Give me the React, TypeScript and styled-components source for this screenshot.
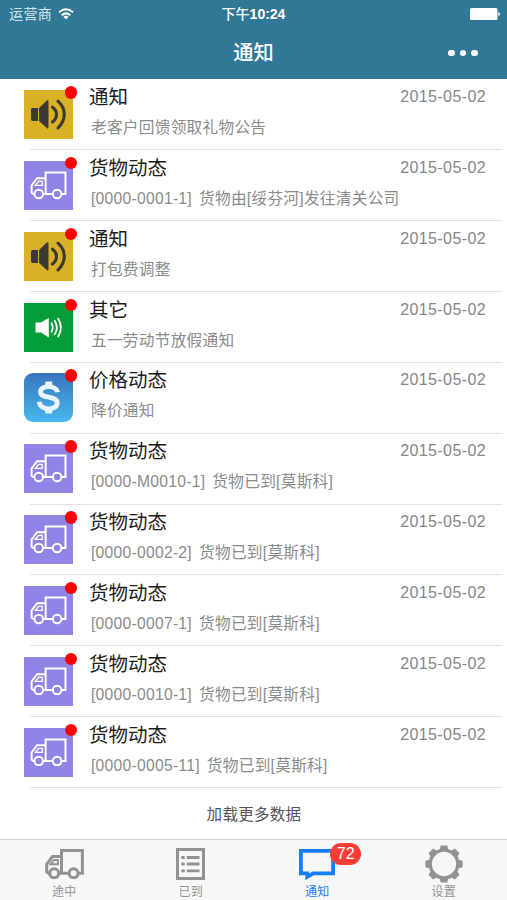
import React from 'react';
import styled, { createGlobalStyle } from 'styled-components';

const GlobalStyle = createGlobalStyle`
  * { box-sizing: border-box; }
  body {
    margin: 0;
    background: #fff;
    font-family: "Liberation Sans", "Noto Sans CJK SC", sans-serif;
  }
`;

const Screen = styled.div`
  width: 507px;
  height: 900px;
  display: flex;
  flex-direction: column;
  overflow: hidden;
  background: #fff;
`;

const Header = styled.header`
  flex: none;
  height: 79px;
  background: #317896;
  color: #fff;
`;

const StatusBar = styled.div`
  height: 27px;
  padding: 1px 7px 0 9px;
  display: grid;
  grid-template-columns: 1fr auto 1fr;
  align-items: center;
  font-size: 14px;
  line-height: 26px;
`;

const Carrier = styled.div`
  display: flex;
  align-items: center;
  gap: 6px;
  letter-spacing: 0.4px;
  color: #d3e6ef;
`;

const Clock = styled.div`
  margin-right: 2px;
  font-weight: 500;
  letter-spacing: 0;
  span { font-weight: 700; }
`;

const BatterySlot = styled.div`
  display: flex;
  justify-content: flex-end;
`;

const NavBar = styled.div`
  height: 52px;
  padding: 0 29px;
  display: grid;
  grid-template-columns: 1fr auto 1fr;
  align-items: center;
`;

const NavTitle = styled.h1`
  grid-column: 2;
  margin: 0;
  font-size: 20.3px;
  line-height: 52px;
  font-weight: 500;
`;

const MoreButton = styled.button`
  justify-self: end;
  display: flex;
  gap: 5px;
  padding: 0;
  border: 0;
  background: none;
`;

const Dot = styled.i`
  width: 6.6px;
  height: 6.6px;
  border-radius: 50%;
  background: #fff;
`;

const List = styled.main`
  flex: 1;
  display: flex;
  flex-direction: column;
`;

const Row = styled.article`
  flex: none;
  height: 70.85px;
  display: grid;
  grid-template-columns: 65px 1fr;
  padding-left: 24px;
`;

const IconTile = styled.div<{ $bg: string; $radius?: number }>`
  position: relative;
  width: 49px;
  height: 49px;
  margin-top: 11px;
  display: flex;
  background: ${(p) => p.$bg};
  border-radius: ${(p) => p.$radius ?? 0}px;
`;

const UnreadDot = styled.i`
  position: absolute;
  right: -4px;
  top: -4px;
  width: 12.5px;
  height: 12.5px;
  border-radius: 50%;
  background: #fe0000;
`;

const RowBody = styled.div`
  min-width: 0;
  padding-right: 21px;
`;

const RowTop = styled.div`
  height: 35px;
  display: flex;
  justify-content: space-between;
`;

const RowTitle = styled.h2`
  margin: 0;
  font-size: 19.5px;
  line-height: 36px;
  font-weight: 400;
  color: #1c1c1c;
`;

const RowDate = styled.time`
  font-size: 16px;
  line-height: 36px;
  letter-spacing: 0.4px;
  color: #868686;
`;

const RowText = styled.p`
  margin: 0;
  padding-left: 2px;
  font-size: 15.7px;
  line-height: 28px;
  letter-spacing: 0.25px;
  word-spacing: 2.5px;
  white-space: nowrap;
  color: #8b8b8b;
`;

const Divider = styled.hr`
  flex: none;
  width: 472px;
  height: 1px;
  margin: -0.5px 0 -0.5px 30px;
  border: 0;
  background: #e2e2e2;
`;

const LoadMore = styled.button`
  flex: 1;
  padding: 0 0 0 1px;
  border: 0;
  background: none;
  font: 15.5px "Liberation Sans", "Noto Sans CJK SC", sans-serif;
  letter-spacing: 0.3px;
  color: #555;
`;

const TabBar = styled.nav`
  flex: none;
  height: 61px;
  display: grid;
  grid-template-columns: repeat(4, 1fr);
  padding-left: 1px;
  border-top: 1px solid #cfcfcf;
  background: #f7f7f7;
`;

const Tab = styled.a<{ $active?: boolean }>`
  display: flex;
  flex-direction: column;
  align-items: center;
  padding-top: 4px;
  color: ${(p) => (p.$active ? '#157efb' : '#929292')};
  font-size: 12px;
  line-height: 18px;
  letter-spacing: 0.3px;
`;

const TabIcon = styled.div`
  position: relative;
  height: 39px;
  display: flex;
  align-items: center;
`;

const Badge = styled.span`
  position: absolute;
  left: 31px;
  top: -1px;
  width: 31px;
  height: 22px;
  border-radius: 11px;
  background: #fc3d35;
  color: #fff;
  font-size: 16px;
  line-height: 22px;
  letter-spacing: 0;
  text-align: center;
`;

const Drawing = styled.svg`
  display: block;
  margin: auto;
`;

const Truck = ({ width, stroke, bg }: { width: number; stroke: number; bg: string }) => (
  <Drawing width={width} height={(width * 30) / 39} viewBox="0 0 39 30" fill="none" stroke="currentColor" strokeWidth={stroke}>
    <path d="M16.5 24V1.6H37.4V24.3H3.5L1.7 23V15.3L7.5 7.6H16.5" />
    <path d="M5.6 15.2 9 10.9H12.9V15.2Z" strokeWidth={stroke * 0.65} />
    <circle cx="9.2" cy="24.3" r="4.5" fill={bg} />
    <circle cx="28.6" cy="24.3" r="4.5" fill={bg} />
  </Drawing>
);

const BigSpeaker = () => (
  <Drawing width="49" height="49" viewBox="0 0 49 49">
    <path d="M8.5 18H14V31H8.5Q7 31 7 29V20Q7 18 8.5 18ZM15 18 22.8 10.5Q24.5 9.5 24.5 11.5V37Q24.5 39.5 22.8 38L15 31Z" fill="#3c3834" />
    <path d="M28.5 17.2Q32.5 20 32.5 24.5T28.5 32M34 11.2Q40.3 17 40.3 24.3T34 38" fill="none" stroke="#3c3834" strokeWidth="3.1" strokeLinecap="round" />
  </Drawing>
);

const SmallSpeaker = () => (
  <Drawing width="49" height="49" viewBox="0 0 49 49">
    <path d="M11.5 19.5H17L24.8 14.7V34.5L17 29.5H11.5Z" fill="#fff" />
    <path d="M27.5 20.3Q30 24.5 27.5 28.8M30.7 17.7Q35 24.5 30.7 31.3M34.2 15.8Q39.6 24.5 34.2 33.5" fill="none" stroke="#fff" strokeWidth="1.8" strokeLinecap="round" />
  </Drawing>
);

const Dollar = () => (
  <Drawing width="49" height="49" viewBox="0 0 49 49" fill="none" stroke="#e9f5fc">
    <path d="M24.7 8.5V14M24.7 35V40.5" strokeWidth="7" />
    <path d="M33.5 19.3C32.5 11.7 16.5 11.8 16.5 18.9C16.5 26 33.2 22.3 33.2 30C33.2 37.8 16 38 15.3 28.8" strokeWidth="4.8" />
  </Drawing>
);

const Wifi = () => (
  <svg width="16" height="12" viewBox="0 0 16 12" fill="none" stroke="#fff" strokeWidth="2">
    <path d="M1 4.3Q8-1.8 15 4.3M3.7 7.2Q8 3.6 12.3 7.2" />
    <path d="M5.4 8.7Q8 6.9 10.6 8.7L8 11.5Z" fill="#fff" stroke="none" />
  </svg>
);

const Battery = () => (
  <svg width="30" height="12" viewBox="0 0 30 12" fill="#fff">
    <rect width="27.5" height="12" rx="1.5" />
    <path d="M28.3 4Q30 4.5 30 6T28.3 8Z" />
  </svg>
);

const ArrivedIcon = () => (
  <Drawing width="29" height="32" viewBox="0 0 29 32" fill="none" stroke="currentColor">
    <rect x="1.5" y="1.5" width="26" height="29" strokeWidth="3" />
    <path d="M5.3 9.5H8.7M5.3 16H8.7M5.3 22.8H8.7M10.8 9.5H23.5M10.8 16H23.5M10.8 22.8H23.5" strokeWidth="2.8" />
  </Drawing>
);

const ChatIcon = () => (
  <Drawing width="36" height="32" viewBox="0 0 36 32" fill="none" stroke="currentColor" strokeWidth="3.8">
    <path d="M1.9 2.9H34.1V25.3H14.2L8.3 28.8V25.3H1.9Z" />
  </Drawing>
);

const GearIcon = () => (
  <Drawing width="38" height="38" viewBox="-19 -19 38 38" fill="currentColor">
    <circle r="13.8" fill="none" stroke="currentColor" strokeWidth="3.3" />
    {[0, 45, 90, 135, 180, 225, 270, 315].map((a) => (
      <path key={a} d="M-4.3-14-3.3-18.6H3.3L4.3-14Z" transform={`rotate(${a})`} />
    ))}
  </Drawing>
);

type Kind = 'notice' | 'cargo' | 'other' | 'price';

const kinds: Record<Kind, { title: string; bg: string; radius?: number; icon: React.ReactNode }> = {
  notice: { title: '通知', bg: '#d9b126', icon: <BigSpeaker /> },
  cargo: { title: '货物动态', bg: '#9184e7', icon: <Truck width={37} stroke={2.1} bg="#9184e7" /> },
  other: { title: '其它', bg: '#059d39', icon: <SmallSpeaker /> },
  price: { title: '价格动态', bg: 'linear-gradient(#3875bd, #48b8ee)', radius: 9, icon: <Dollar /> },
};

const messages: { kind: Kind; text: string }[] = [
  { kind: 'notice', text: '老客户回馈领取礼物公告' },
  { kind: 'cargo', text: '[0000-0001-1] 货物由[绥芬河]发往清关公司' },
  { kind: 'notice', text: '打包费调整' },
  { kind: 'other', text: '五一劳动节放假通知' },
  { kind: 'price', text: '降价通知' },
  { kind: 'cargo', text: '[0000-M0010-1] 货物已到[莫斯科]' },
  { kind: 'cargo', text: '[0000-0002-2] 货物已到[莫斯科]' },
  { kind: 'cargo', text: '[0000-0007-1] 货物已到[莫斯科]' },
  { kind: 'cargo', text: '[0000-0010-1] 货物已到[莫斯科]' },
  { kind: 'cargo', text: '[0000-0005-11] 货物已到[莫斯科]' },
];

const TileGlyph = styled.div`
  flex: 1;
  display: flex;
  color: #fff;
`;

export default function App() {
  return (
    <Screen>
      <GlobalStyle />
      <Header>
        <StatusBar>
          <Carrier>运营商 <Wifi /></Carrier>
          <Clock>下午<span>10:24</span></Clock>
          <BatterySlot><Battery /></BatterySlot>
        </StatusBar>
        <NavBar>
          <NavTitle>通知</NavTitle>
          <MoreButton aria-label="更多"><Dot /><Dot /><Dot /></MoreButton>
        </NavBar>
      </Header>
      <List>
        {messages.map(({ kind, text }) => {
          const k = kinds[kind];
          return (
            <React.Fragment key={text}>
              <Row>
                <IconTile $bg={k.bg} $radius={k.radius}>
                  <TileGlyph>{k.icon}</TileGlyph>
                  <UnreadDot />
                </IconTile>
                <RowBody>
                  <RowTop>
                    <RowTitle>{k.title}</RowTitle>
                    <RowDate>2015-05-02</RowDate>
                  </RowTop>
                  <RowText>{text}</RowText>
                </RowBody>
              </Row>
              <Divider />
            </React.Fragment>
          );
        })}
        <LoadMore>加载更多数据</LoadMore>
      </List>
      <TabBar>
        <Tab>
          <TabIcon><Truck width={39} stroke={3} bg="#f7f7f7" /></TabIcon>
          途中
        </Tab>
        <Tab>
          <TabIcon><ArrivedIcon /></TabIcon>
          已到
        </Tab>
        <Tab $active>
          <TabIcon><ChatIcon /><Badge>72</Badge></TabIcon>
          通知
        </Tab>
        <Tab>
          <TabIcon><GearIcon /></TabIcon>
          设置
        </Tab>
      </TabBar>
    </Screen>
  );
}
